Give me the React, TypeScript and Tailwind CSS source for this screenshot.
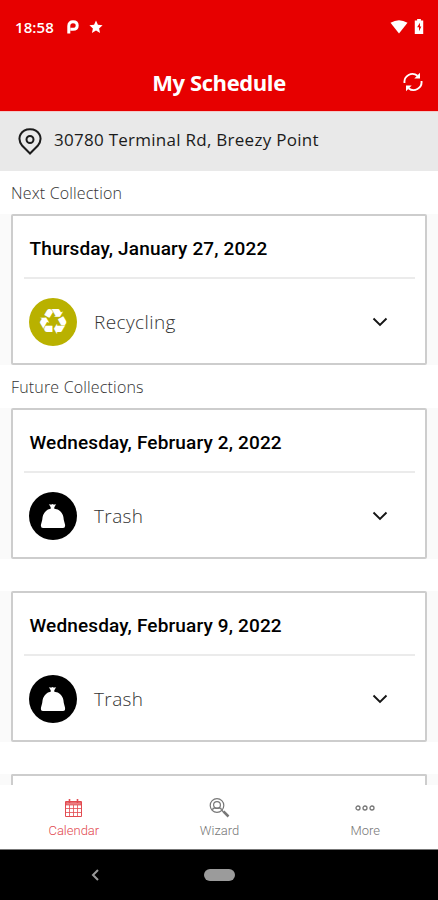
import type { ReactNode } from 'react'

const collections = [
  { date: 'Wednesday, February 2, 2022', kind: 'Trash' },
  { date: 'Wednesday, February 9, 2022', kind: 'Trash' },
]

export default function App() {
  return (
    <div className="flex h-[900px] w-[438px] flex-col overflow-hidden bg-white font-['Open_Sans',sans-serif]">
      <header className="h-[111px] shrink-0 bg-[#e70000] text-white">
        <StatusBar />
        <div className="grid h-[58px] grid-cols-[1fr_auto_1fr] items-center">
          <h1 className="col-start-2 text-[22px] leading-[30px] font-bold tracking-[-0.4px]">My Schedule</h1>
          <RefreshIcon />
        </div>
      </header>

      <div className="flex h-[60px] shrink-0 items-center border-t border-[#f2caca] bg-[#e9e9e9] pl-[18px] text-[#1b1b1b]">
        <PinIcon />
        <span className="ml-[12px] pb-[3px] text-[17px] leading-6 tracking-[0.27px]">30780 Terminal Rd, Breezy Point</span>
      </div>

      <main className="min-h-0 flex-1">
        <SectionTitle>Next Collection</SectionTitle>
        <CollectionCard date="Thursday, January 27, 2022" kind="Recycling" />
        <SectionTitle>Future Collections</SectionTitle>
        <div className="flex flex-col gap-[32px]">
          {collections.map((c) => (
            <CollectionCard key={c.date} date={c.date} kind={c.kind} />
          ))}
          {/* top edge of the next card, peeking out above the tab bar */}
          <div className="h-[11px] bg-[#fafafa] px-[11px]">
            <div className="h-full rounded-t-[2px] border-2 border-b-0 border-[#cdcdcd] bg-white" />
          </div>
        </div>
      </main>

      <nav className="grid h-[64px] shrink-0 grid-cols-3 bg-white pl-px font-[Roboto,sans-serif]">
        <Tab label="Calendar" active>
          <CalendarIcon />
        </Tab>
        <Tab label="Wizard">
          <WizardIcon />
        </Tab>
        <Tab label="More">
          <MoreIcon />
        </Tab>
      </nav>

      <div className="grid h-[51px] shrink-0 grid-cols-3 items-center border-t border-[#777] bg-black">
        <svg className="ml-[90px] h-[12px] w-[10px]" viewBox="0 0 10 12" fill="none" stroke="#999" strokeWidth="2">
          <path d="M8 1 3 6l5 5" />
        </svg>
        <div className="h-[12px] w-[31px] justify-self-center rounded-full bg-[#9b9b9b]" />
      </div>
    </div>
  )
}

function StatusBar() {
  return (
    <div className="flex h-[53px] items-center pr-[14px] pl-[15px]">
      <span className="w-[52px] text-[15px] leading-5 font-semibold tracking-[0.1px]">18:58</span>
      <svg className="h-[14px] w-[12px]" viewBox="0 0 12 14" fill="none" stroke="white" strokeWidth="3">
        <path d="M1.800 13.500V6C1.800 3 3.500 1.800 6 1.800c2.600 0 4.200 1.400 4.200 3.700S8.600 9.300 6 9.300H3.500" />
      </svg>
      <svg className="ml-[10px] h-[14px] w-[14px]" viewBox="0 0 24 24" fill="white">
        <path d="m12 1 3.300 7.300 8 .8-6 5.300 1.700 7.900-7-4.100-7 4.100 1.700-7.900-6-5.300 8-.8z" />
      </svg>
      <svg className="ml-auto h-[14px] w-[18px]" viewBox="0 0 18 14" fill="white">
        <path d="M0.500 2.800Q9-2.200 17.500 2.800L9 13.500z" />
      </svg>
      <svg className="ml-[6px] h-[15px] w-[10px]" viewBox="0 0 10 16">
        <path d="M3 0h4v1.500h2.500V16h-9V1.500H3z" fill="white" />
        <path d="M6 4 3 8.800h2V13l2.500-5H6z" fill="#e70000" />
      </svg>
    </div>
  )
}

function SectionTitle({ children }: { readonly children: ReactNode }) {
  return (
    <h2 className="flex h-[43px] items-center pl-[11px] text-[16px] leading-6 font-light tracking-[0.17px] text-[#333]">
      {children}
    </h2>
  )
}

function CollectionCard({ date, kind }: { readonly date: string; readonly kind: string }) {
  return (
    <section className="flex h-[151px] bg-[#fafafa] px-[11px]">
      <div className="flex-1 rounded-[2px] border-2 border-[#cdcdcd] bg-white">
        <h3 className="mr-[10px] ml-[11px] flex h-[63px] items-center border-b-2 border-[#ebebeb] pt-[4px] pl-[5.500px] font-[Roboto,sans-serif] text-[19px] leading-6 font-medium tracking-[0.15px] text-black">
          {date}
        </h3>
        <div className="flex h-[85px] items-center pr-[37px] pl-[16px]">
          {kind === 'Recycling' ? (
            <div className="flex size-[48px] items-center justify-center rounded-full bg-[#b9b100]">
              <span className="pl-px font-['DejaVu_Sans',sans-serif] text-[36px] leading-[36px] text-white">♻</span>
            </div>
          ) : (
            <div className="flex size-[48px] items-center justify-center rounded-full bg-black">
              <TrashBagIcon />
            </div>
          )}
          <span className="ml-[17px] text-[19px] leading-7 font-light tracking-[0.4px] text-[#333]">{kind}</span>
          <svg className="ml-auto h-[10px] w-[16px]" viewBox="0 0 16 10" fill="none" stroke="#151515" strokeWidth="1.900">
            <path d="m1.500 1.500 6.500 6.500 6.500-6.500" />
          </svg>
        </div>
      </div>
    </section>
  )
}

function Tab({
  label,
  active = false,
  children,
}: {
  readonly label: string
  readonly active?: boolean
  readonly children: ReactNode
}) {
  return (
    <div className={`flex flex-col items-center pt-[12px] ${active ? 'text-[#e24a50]' : 'text-[#777]'}`}>
      <div className="flex h-[22px] items-center">{children}</div>
      <span className="mt-[3px] text-[13px] leading-[18px] font-light">{label}</span>
    </div>
  )
}

function PinIcon() {
  return (
    <svg className="h-[27px] w-[24px]" viewBox="0 0 24 27" fill="none" stroke="currentColor" strokeWidth="2">
      <path d="M12 25.500 4.300 17.800C-2 10 3.200 1.200 12 1.200S26 10 19.700 17.800z" />
      <circle cx="12" cy="11.500" r="3.500" />
    </svg>
  )
}

function RefreshIcon() {
  return (
    <svg
      className="mr-[15px] h-[20px] w-[20px] justify-self-end"
      viewBox="0 0 20 20"
      fill="none"
      stroke="white"
      strokeWidth="1.900"
    >
      <path d="M1.500 11A8 8 0 0 1 14.500 3.800M18.500 9A8 8 0 0 1 5.500 16.200" />
      <path d="M17 .8v5.700h-5.700zM3 19.200v-5.700h5.700z" fill="white" stroke="none" />
    </svg>
  )
}

function TrashBagIcon() {
  return (
    <svg className="h-[26px] w-[26px]" viewBox="0 0 26 26" fill="white">
      <path d="M8.800 1q2 1 3.700 0 1.700 1 3.700 0l-1.900 3.200v1.600q4.200.4 5.700 2.200 3.500 3 3.800 9l1.200 4.500q.6 3.500-2 3.500H3q-2.600 0-2-3.500L2.200 17Q2.500 11 6 8q1.500-1.800 4.700-2.200V4.200z" />
    </svg>
  )
}

function CalendarIcon() {
  return (
    <svg className="h-[18px] w-[17px]" viewBox="0 0 17 18" fill="none" stroke="currentColor">
      <path d="M.5 2.500h16v15H.5z" />
      <path d="M1 3h15v3H1z" fill="currentColor" fillOpacity="0.7" strokeOpacity="0.7" />
      <path d="M4.500 0v4m8-4v4" strokeWidth="1.600" />
      <path d="M4.500 6v12m4-12v12m4-12v12M0 9.500h17M0 13.500h17" strokeOpacity="0.8" />
    </svg>
  )
}

function WizardIcon() {
  return (
    <svg className="h-[20px] w-[21px]" viewBox="0 0 21 20" fill="none" stroke="currentColor" strokeWidth="1.200">
      <circle cx="8" cy="7.500" r="6.800" />
      <circle cx="8" cy="7" r="3.400" />
      <path d="M3.800 12V11q0-.8 1.400-.8h5.600q1.400 0 1.400.8v1" />
      <path d="m12.500 12 2 2" />
      <path d="m14.500 13.500 5 5" strokeWidth="2.500" />
    </svg>
  )
}

function MoreIcon() {
  return (
    <svg className="h-[8px] w-[20px]" viewBox="0 0 20 8" fill="none" stroke="currentColor" strokeWidth="1.300">
      <circle cx="3" cy="4" r="2" />
      <circle cx="10" cy="4" r="2" />
      <circle cx="17" cy="4" r="2" />
    </svg>
  )
}
